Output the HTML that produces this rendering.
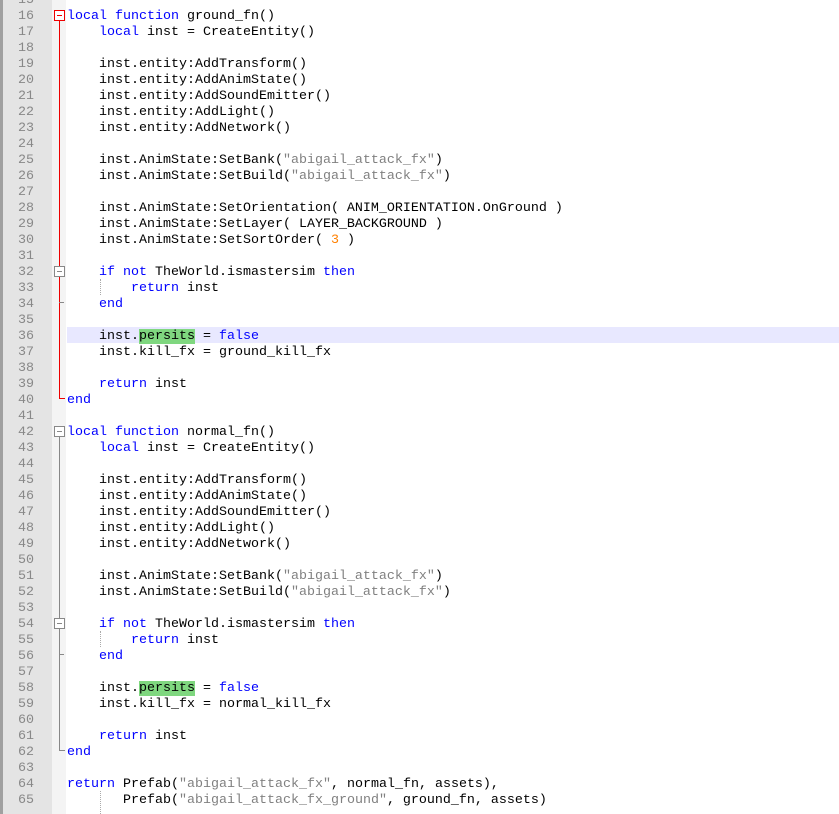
<!DOCTYPE html>
<html><head><style>
body{margin:0;width:839px;height:814px;overflow:hidden;background:#fff;position:relative;font-family:"Liberation Mono",monospace;}
.bd{position:absolute;left:0;top:0;width:3px;height:814px;background:#a0a0a0}
.gut{position:absolute;left:3px;top:0;width:49px;height:814px;background:#e4e4e4}
.fold{position:absolute;left:52px;top:0;width:14px;height:814px;background:#f4f4f4}
pre{margin:0;position:absolute;top:-7px;font-size:13.33px;line-height:16px;font-family:"Liberation Mono",monospace}
.ln{left:3px;width:31px;text-align:right;color:#888}
.code{left:67px;color:#000}
.k{color:#0000ff}.s{color:#808080}.n{color:#ff8000}
.hl{position:absolute;left:67px;top:327px;width:772px;height:16px;background:#e8e8ff}
.g{background:#7fd77f}
.v{position:absolute;width:1px}
.h{position:absolute;height:1px}
.box{position:absolute;width:9px;height:9px;background:#fff}
.dot{position:absolute;width:0;border-left:1px dotted #aaa;height:16px}
</style></head><body>
<div class="bd"></div><div class="gut"></div><div class="fold"></div>
<div class="hl"></div>
<div class="v" style="left:59px;top:20px;height:379px;background:#e00"></div>
<div class="h" style="left:59px;top:398px;width:6px;background:#e00"></div>
<div class="h" style="left:59px;top:302px;width:5px;background:#888"></div>
<div class="box" style="left:54px;top:10px;border:1px solid #e00;background:#fff"></div>
<div class="h" style="left:57px;top:15px;width:5px;background:#e00"></div>
<div class="box" style="left:54px;top:266px;border:1px solid #888"></div>
<div class="h" style="left:57px;top:271px;width:5px;background:#888"></div>
<div class="box" style="left:54px;top:426px;border:1px solid #888"></div>
<div class="h" style="left:57px;top:431px;width:5px;background:#888"></div>
<div class="v" style="left:59px;top:436px;height:315px;background:#888"></div>
<div class="h" style="left:59px;top:750px;width:6px;background:#888"></div>
<div class="box" style="left:54px;top:618px;border:1px solid #888"></div>
<div class="h" style="left:57px;top:623px;width:5px;background:#888"></div>
<div class="h" style="left:59px;top:654px;width:5px;background:#888"></div>
<div class="dot" style="left:100px;top:279px"></div>
<div class="dot" style="left:100px;top:631px"></div>
<div class="dot" style="left:100px;top:791px;height:23px"></div>
<pre class="ln">15
16
17
18
19
20
21
22
23
24
25
26
27
28
29
30
31
32
33
34
35
36
37
38
39
40
41
42
43
44
45
46
47
48
49
50
51
52
53
54
55
56
57
58
59
60
61
62
63
64
65</pre>
<pre class="code">

<span class="k">local</span> <span class="k">function</span> ground_fn()
    <span class="k">local</span> inst = CreateEntity()

    inst.entity:AddTransform()
    inst.entity:AddAnimState()
    inst.entity:AddSoundEmitter()
    inst.entity:AddLight()
    inst.entity:AddNetwork()

    inst.AnimState:SetBank(<span class="s">"abigail_attack_fx"</span>)
    inst.AnimState:SetBuild(<span class="s">"abigail_attack_fx"</span>)

    inst.AnimState:SetOrientation( ANIM_ORIENTATION.OnGround )
    inst.AnimState:SetLayer( LAYER_BACKGROUND )
    inst.AnimState:SetSortOrder( <span class="n">3</span> )

    <span class="k">if</span> <span class="k">not</span> TheWorld.ismastersim <span class="k">then</span>
        <span class="k">return</span> inst
    <span class="k">end</span>

    inst.<span class="g">persits</span> = <span class="k">false</span>
    inst.kill_fx = ground_kill_fx

    <span class="k">return</span> inst
<span class="k">end</span>

<span class="k">local</span> <span class="k">function</span> normal_fn()
    <span class="k">local</span> inst = CreateEntity()

    inst.entity:AddTransform()
    inst.entity:AddAnimState()
    inst.entity:AddSoundEmitter()
    inst.entity:AddLight()
    inst.entity:AddNetwork()

    inst.AnimState:SetBank(<span class="s">"abigail_attack_fx"</span>)
    inst.AnimState:SetBuild(<span class="s">"abigail_attack_fx"</span>)

    <span class="k">if</span> <span class="k">not</span> TheWorld.ismastersim <span class="k">then</span>
        <span class="k">return</span> inst
    <span class="k">end</span>

    inst.<span class="g">persits</span> = <span class="k">false</span>
    inst.kill_fx = normal_kill_fx

    <span class="k">return</span> inst
<span class="k">end</span>

<span class="k">return</span> Prefab(<span class="s">"abigail_attack_fx"</span>, normal_fn, assets),
       Prefab(<span class="s">"abigail_attack_fx_ground"</span>, ground_fn, assets)</pre>
</body></html>
